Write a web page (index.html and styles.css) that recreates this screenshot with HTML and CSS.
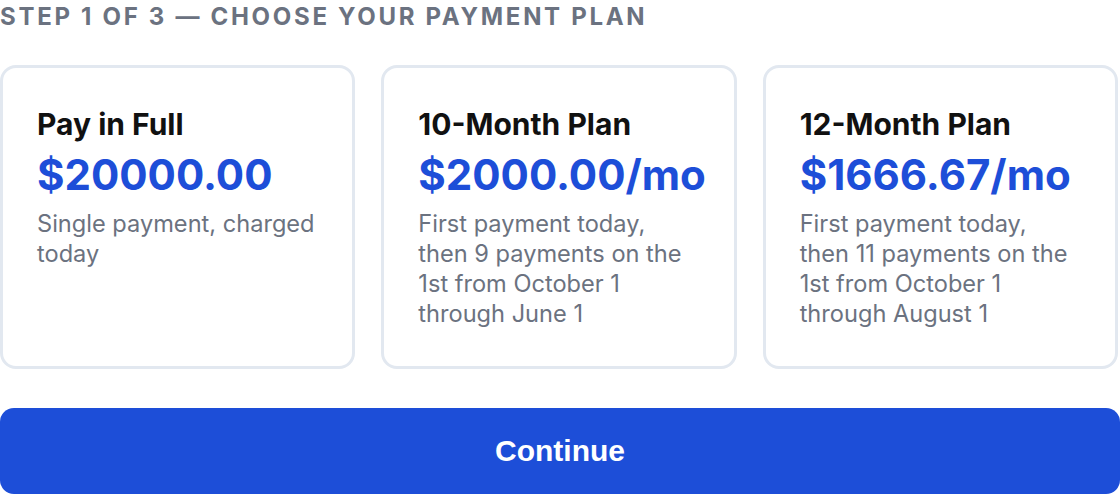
FILE: index.html
```html
<!DOCTYPE html>
<html lang="en">
<head>
    <meta charset="UTF-8">
    <title>Payment Plan</title>
    <link rel="stylesheet" href="styles.css">
</head>
<body>
    <div class="step-label">Step 1 of 3 — Choose your payment plan</div>

    <div class="plans">
        <div class="plan">
            <h2 class="plan-title">Pay in Full</h2>
            <div class="plan-price">$20000.00</div>
            <p class="plan-desc">Single payment, charged today</p>
        </div>
        <div class="plan">
            <h2 class="plan-title">10-Month Plan</h2>
            <div class="plan-price">$2000.00/mo</div>
            <p class="plan-desc">First payment today, then 9 payments on the 1st from October 1 through June 1</p>
        </div>
        <div class="plan">
            <h2 class="plan-title">12-Month Plan</h2>
            <div class="plan-price">$1666.67/mo</div>
            <p class="plan-desc">First payment today, then 11 payments on the 1st from October 1 through August 1</p>
        </div>
    </div>

    <button class="continue-btn">Continue</button>
</body>
</html>
```

FILE: styles.css
```css
body {
    margin: 0;
    padding: 0;
    background-color: #fff;
    font-family: Inter, "Noto Sans", sans-serif;
}

.step-label {
    font-size: 24px;
    font-weight: 700;
    letter-spacing: 2.7px;
    text-transform: uppercase;
    color: #6b7280;
    line-height: 34px;
}

.plans {
    display: grid;
    grid-template-columns: repeat(3, minmax(0, 1fr));
    gap: 26px;
    margin-top: 31px;
    margin-right: 2px;
}

.plan {
    border: 3px solid #e2e8f0;
    border-radius: 16px;
    padding: 38px 34px 37px;
}

.plan-title {
    margin: 0;
    font-size: 30px;
    line-height: 36px;
    font-weight: 700;
    color: #111;
}

.plan-price {
    margin-top: 8px;
    font-size: 42px;
    line-height: 50px;
    font-weight: 700;
    color: #1d4ed8;
}

.plan-desc {
    margin: 9px 0 0;
    font-size: 23.6px;
    line-height: 30px;
    color: #6b7280;
}

.continue-btn {
    display: block;
    width: 100%;
    height: 86px;
    margin-top: 39px;
    border: none;
    border-radius: 14px;
    background-color: #1d4ed8;
    color: #fff;
    font-family: "Liberation Sans", Arial, sans-serif;
    font-size: 30px;
    font-weight: 700;
}
```
